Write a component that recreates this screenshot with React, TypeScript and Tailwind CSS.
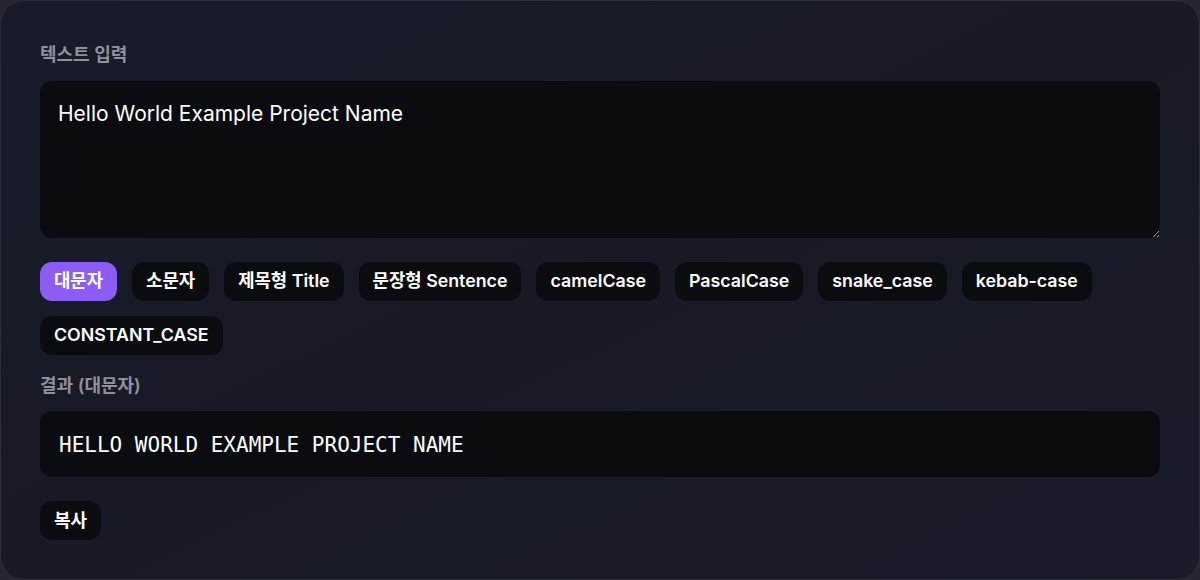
import { useState } from 'react';

const MODES = [
  { key: 'upper', label: '대문자' },
  { key: 'lower', label: '소문자' },
  { key: 'title', label: '제목형 Title' },
  { key: 'sentence', label: '문장형 Sentence' },
  { key: 'camel', label: 'camelCase' },
  { key: 'pascal', label: 'PascalCase' },
  { key: 'snake', label: 'snake_case' },
  { key: 'kebab', label: 'kebab-case' },
  { key: 'constant', label: 'CONSTANT_CASE' },
] as const;

type Mode = (typeof MODES)[number]['key'];

const words = (s: string) => s.trim().split(/[\s_\-]+|(?<=[a-z])(?=[A-Z])/).filter(Boolean);
const cap = (w: string) => w.charAt(0).toUpperCase() + w.slice(1).toLowerCase();

function convert(text: string, mode: Mode) {
  const w = words(text);
  switch (mode) {
    case 'upper': return text.toUpperCase();
    case 'lower': return text.toLowerCase();
    case 'title': return w.map(cap).join(' ');
    case 'sentence': return w.map((x, i) => (i === 0 ? cap(x) : x.toLowerCase())).join(' ');
    case 'camel': return w.map((x, i) => (i === 0 ? x.toLowerCase() : cap(x))).join('');
    case 'pascal': return w.map(cap).join('');
    case 'snake': return w.map(x => x.toLowerCase()).join('_');
    case 'kebab': return w.map(x => x.toLowerCase()).join('-');
    case 'constant': return w.map(x => x.toUpperCase()).join('_');
  }
}

const font = "font-['Inter','Noto_Sans_CJK_KR',sans-serif]";

export default function App() {
  const [text, setText] = useState('Hello World Example Project Name');
  const [mode, setMode] = useState<Mode>('upper');
  const current = MODES.find(m => m.key === mode)!;

  return (
    <div className={`min-h-screen bg-[#242631] ${font}`}>
      <div className="h-[580px] rounded-3xl border border-[#2a2d3a] bg-gradient-to-br from-[#181b29] via-[#171a26] to-[#191b2a] px-[39px] pt-10 pb-10">
        <label className="mb-3 block text-lg leading-7 font-semibold text-[#8e919c]">텍스트 입력</label>
        <textarea
          value={text}
          onChange={e => setText(e.target.value)}
          className="block h-[157px] w-full rounded-xl bg-[#0b0c10] px-[18px] pt-[19px] pb-[15px] text-[21px] leading-7 text-white outline-none"
        />

        <div className="mt-6 flex flex-wrap gap-[15px]">
          {MODES.map(m => (
            <button
              key={m.key}
              onClick={() => setMode(m.key)}
              className={
                'h-[39px] rounded-xl px-[14px] text-[17.8px] font-semibold text-white ' +
                (mode === m.key ? 'bg-[#8b5cf6]' : 'bg-[#0b0c10]')
              }
            >
              {m.label}
            </button>
          ))}
        </div>

        <label className="mt-[17px] mb-[11px] block text-lg leading-7 font-semibold text-[#8e919c]">결과 ({current.label})</label>
        <div className="flex h-[66px] items-center rounded-xl bg-[#0b0c10] px-[19px] pt-[3px] font-['DejaVu_Sans_Mono',monospace] text-[21px] text-white">
          {convert(text, mode)}
        </div>

        <button
          onClick={() => navigator.clipboard?.writeText(convert(text, mode))}
          className="mt-6 h-[39px] rounded-xl bg-[#0b0c10] px-[14px] text-lg font-semibold text-white"
        >
          복사
        </button>
      </div>
    </div>
  );
}
